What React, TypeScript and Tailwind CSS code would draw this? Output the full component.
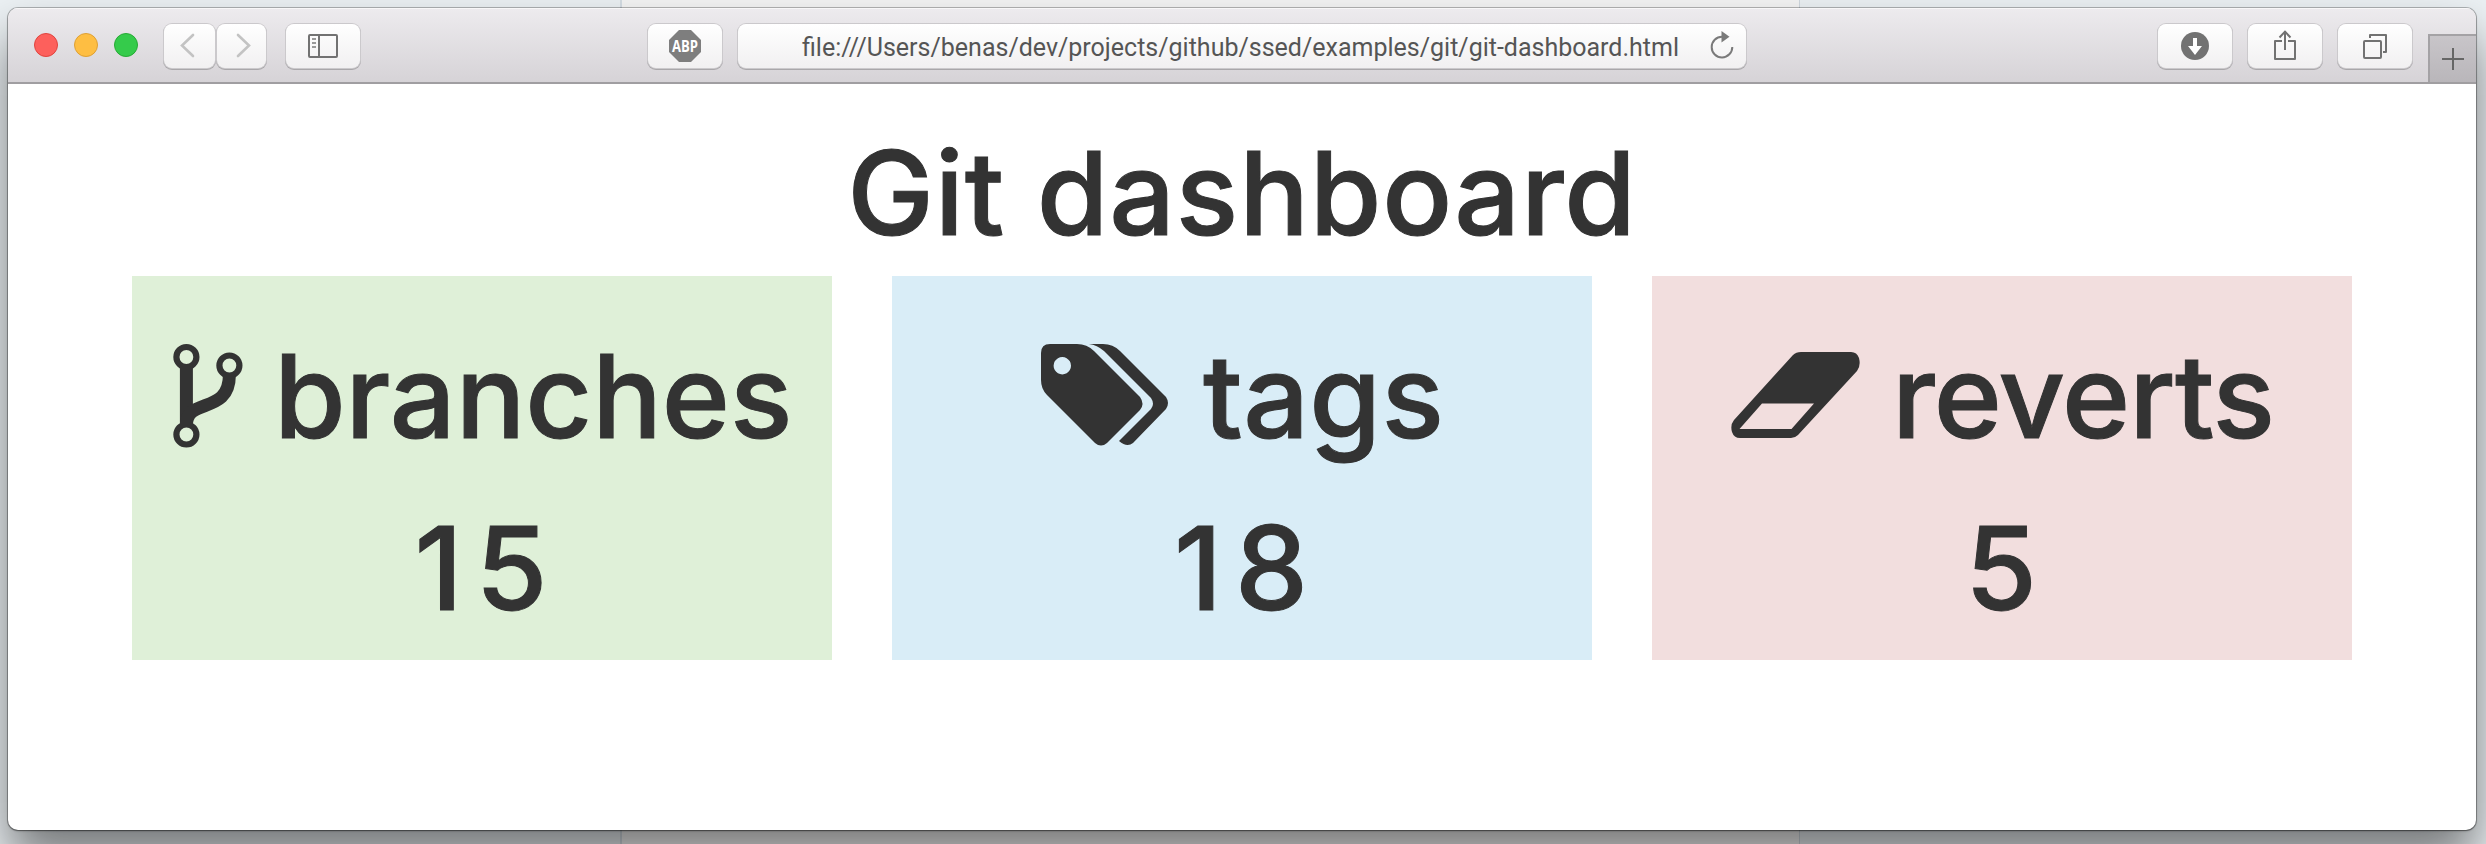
import type { ReactNode } from "react";

const HEADING =
  "whitespace-pre font-[Inter,'Liberation_Sans',sans-serif] font-medium text-[116px] leading-[132px] text-[#333] [-webkit-text-stroke:1px_#333]";

function ToolButton({ className, children }: { className: string; children?: ReactNode }) {
  return (
    <div
      className={
        "flex h-[44px] shrink-0 items-center justify-center rounded-[8px] bg-gradient-to-b from-white to-[#f1f0f1] shadow-[0_0_0_1px_#cbc9cc,0_1px_0_1px_#a9a7aa] " +
        className
      }
    >
      {children}
    </div>
  );
}

function Toolbar() {
  return (
    <div className="flex h-[76px] shrink-0 items-start border-b-2 border-[#a09ea1] bg-gradient-to-b from-[#edebee] to-[#d6d3d7] pt-[16px] shadow-[inset_0_1px_0_#f8f7f8]">
      <div className="mt-[9px] ml-[26px] flex gap-[16px]">
        <div className="size-[24px] rounded-full border border-[#e0443e] bg-[#fd605c]" />
        <div className="size-[24px] rounded-full border border-[#dea034] bg-[#febe42]" />
        <div className="size-[24px] rounded-full border border-[#27aa35] bg-[#35cb4b]" />
      </div>
      <ToolButton className="ml-[26px] w-[51px]">
        <svg width="20" height="28" viewBox="0 0 20 28" fill="none" stroke="#c3c3c3" strokeWidth="2.6" className="-translate-x-[2px]">
          <path d="M15 3 L4 13.5 L15 24" strokeLinecap="round" />
        </svg>
      </ToolButton>
      <ToolButton className="ml-[2px] w-[49px]">
        <svg width="20" height="28" viewBox="0 0 20 28" fill="none" stroke="#c3c3c3" strokeWidth="2.6" className="translate-x-[1px]">
          <path d="M5 3 L16 13.5 L5 24" strokeLinecap="round" />
        </svg>
      </ToolButton>
      <ToolButton className="ml-[20px] w-[74px]">
        <svg width="30" height="24" viewBox="0 0 30 24" fill="none" stroke="#727272" strokeWidth="2">
          <rect x="1" y="1" width="28" height="22" rx="1" />
          <path d="M11 1 V23" />
          <path d="M4 5 H8 M4 9 H8 M4 13 H8" stroke="#999" />
        </svg>
      </ToolButton>
      <ToolButton className="ml-[288px] w-[74px]">
        <svg width="32" height="32" viewBox="0 0 32 32" className="overflow-visible">
          <path d="M10 0 H22 L32 10 V22 L22 32 H10 L0 22 V10 Z" fill="#7e7e7e" />
          <text x="16" y="22" textAnchor="middle" textLength="26" lengthAdjust="spacingAndGlyphs" fill="#fff" className="font-['Open_Sans',sans-serif] text-[16px] font-bold">
            ABP
          </text>
        </svg>
      </ToolButton>
      <ToolButton className="ml-[16px] w-[1008px] pr-[12px] pl-[64px]">
        <span className="grow translate-y-[2px] font-[Roboto,sans-serif] text-[25px] whitespace-nowrap text-[#555]">
          file:///Users/benas/dev/projects/github/ssed/examples/git/git-dashboard.html
        </span>
        <svg width="24" height="30" viewBox="0 0 24 30" fill="none">
          <path d="M12 5.8 A10.3 10.3 0 1 0 22.3 16" stroke="#7a7a7a" strokeWidth="2" />
          <path d="M11.5 0 L19.5 5.8 L11.5 11.5 Z" fill="#7a7a7a" />
        </svg>
      </ToolButton>
      <ToolButton className="ml-[412px] w-[74px]">
        <svg width="28" height="28" viewBox="0 0 28 28">
          <circle cx="14" cy="14" r="14" fill="#727272" />
          <path d="M12 6 H16 V14 H21 L14 23 L7 14 H12 Z" fill="#fff" />
        </svg>
      </ToolButton>
      <ToolButton className="ml-[16px] w-[74px]">
        <svg width="24" height="32" viewBox="0 0 24 32" fill="none" stroke="#727272" strokeWidth="2" className="-translate-y-[1px]">
          <path d="M9 12 H2 V30 H22 V12 H15" strokeLinejoin="round" />
          <path d="M12 21 V3 M6.5 8.5 L12 2.6 L17.5 8.5" />
        </svg>
      </ToolButton>
      <ToolButton className="ml-[16px] w-[74px]">
        <svg width="26" height="26" viewBox="0 0 26 26" fill="none" stroke="#727272" strokeWidth="2" strokeLinejoin="round">
          <rect x="2" y="8" width="17" height="17" rx="1" />
          <path d="M8 5 V2 H24 V19 H21" />
        </svg>
      </ToolButton>
      <div className="mt-[10px] ml-auto flex h-[48px] w-[48px] items-center justify-center border-t-2 border-l-2 border-[#a4a2a5] bg-gradient-to-b from-[#c8c5c9] to-[#b9b6ba]">
        <svg width="24" height="24" viewBox="0 0 24 24" stroke="#666" strokeWidth="2">
          <path d="M12 1 V23 M1 12 H23" />
        </svg>
      </div>
    </div>
  );
}

function BranchIcon() {
  return (
    <svg width="70" height="112" viewBox="0 0 70 112" fill="none" stroke="#333" className="shrink-0">
      <circle cx="13.4" cy="18" r="10" strokeWidth="6.2" />
      <circle cx="56.4" cy="26.5" r="10" strokeWidth="6.2" />
      <circle cx="13.4" cy="95.5" r="10" strokeWidth="6.2" />
      <path d="M13.4 28 V86" strokeWidth="13" />
      <path d="M13.4 86 C13.4 58 56.4 76 56.4 36" strokeWidth="13" />
    </svg>
  );
}

function TagsIcon() {
  return (
    <svg width="128" height="104" viewBox="0 0 128 104" fill="#333" className="shrink-0">
      <path
        fillRule="evenodd"
        d="M9 0 H36 Q46 0 53 7 L99 53 Q104 60 99 66 L66 99 Q60 104 54 99 L6 51 Q0 45 0 36 V9 Q0 0 9 0 Z M21.3 13 a8.7 8.7 0 1 0 .01 0 Z"
      />
      <path d="M48 0 H62 Q72 0 79 7 L125 53 Q129 59 125 65 L92 99 Q86 104 78 97 L110 65 Q114 60 110 54 L63 7 Q56 1 48 0 Z" />
    </svg>
  );
}

function EraserIcon() {
  return (
    <svg width="130" height="106" viewBox="0 0 130 106" fill="#333" className="shrink-0">
      <path
        fillRule="evenodd"
        d="M70 0 H120 Q126 0 128 6 Q130 14 126 19 L67 83 Q64 86 60 86 H9 Q3 86 1 80 Q-1 73 3 68 L62 3 Q65 0 70 0 Z M31 51.5 L8.5 77 H60.5 L83 51.5 Z"
      />
    </svg>
  );
}

type CardProps = { tone: string; row: string; icon: ReactNode; label: string; labelClass: string; value: string };

function Card({ tone, row, icon, label, labelClass, value }: CardProps) {
  return (
    <div className={"flex h-[384px] w-[700px] shrink-0 flex-col pt-[54px] " + tone}>
      <div className={"flex h-[132px] items-start " + row}>
        {icon}
        <span className={HEADING + " " + labelClass}>{label}</span>
      </div>
      <div className={HEADING + " mt-[40px] pl-[11px] text-center tracking-[13px]"}>{value}</div>
    </div>
  );
}

export default function App() {
  return (
    <div className="relative flex h-[844px] w-[2486px] overflow-hidden bg-[#ecf1f4] font-['Liberation_Sans',Arial,sans-serif]">
      <div className="w-[622px] shrink-0 border-r-2 border-[#d5dde4]" />
      <div className="w-[1178px] shrink-0 border-r border-[#d0d8df] bg-[#f5f5f5]" />
      <div className="absolute top-[8px] left-[8px] flex h-[822px] w-[2468px] flex-col overflow-hidden rounded-[10px] bg-white shadow-[0_0_0_1px_rgba(0,0,0,0.25),0_1px_2px_rgba(0,0,0,0.4),0_30px_50px_rgba(0,0,0,0.5)]">
        <Toolbar />
        <h1 className={HEADING + " mt-[43px] text-center tracking-[0.8px]"}>Git dashboard</h1>
        <div className="mt-[17px] ml-[124px] flex gap-[60px]">
          <Card tone="bg-[#dff0d8]" row="pl-[41px]" icon={<div className="pt-[9px]"><BranchIcon /></div>} label="branches" labelClass="ml-[31px] tracking-[-0.1px]" value="15" />
          <Card tone="bg-[#d9edf7]" row="pl-[149px]" icon={<div className="pt-[14px]"><TagsIcon /></div>} label="tags" labelClass="ml-[34px] tracking-[0.2px]" value="18" />
          <Card tone="bg-[#f2dede]" row="pl-[79px]" icon={<div className="pt-[22px]"><EraserIcon /></div>} label="reverts" labelClass="ml-[31px] tracking-[-1px]" value="5" />
        </div>
      </div>
    </div>
  );
}
